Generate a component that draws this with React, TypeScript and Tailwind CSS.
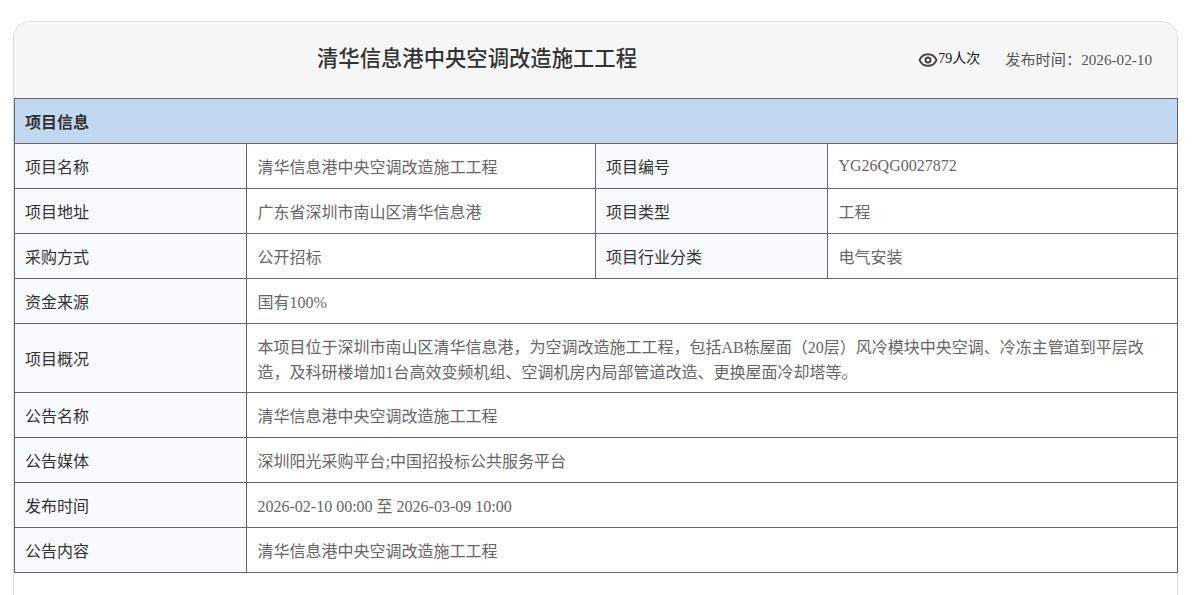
import { Eye } from "lucide-react"

const labelCell = "border border-[#666] bg-[#f9fafc] px-[10px] pt-[4px] pb-0 text-left font-normal text-[#333]"
const valueCell = "border border-[#666] pl-[10.5px] pr-[10px] pt-[3px] pb-0 text-left text-[#666]"

const fullRows = [
    { label: "资金来源", value: "国有100%" },
    {
        label: "项目概况",
        value: "本项目位于深圳市南山区清华信息港，为空调改造施工工程，包括AB栋屋面（20层）风冷模块中央空调、冷冻主管道到平层改造，及科研楼增加1台高效变频机组、空调机房内局部管道改造、更换屋面冷却塔等。",
        tall: true,
    },
    { label: "公告名称", value: "清华信息港中央空调改造施工工程" },
    { label: "公告媒体", value: "深圳阳光采购平台;中国招投标公共服务平台" },
    { label: "发布时间", value: "2026-02-10 00:00 至 2026-03-09 10:00" },
    { label: "公告内容", value: "清华信息港中央空调改造施工工程" },
]

const splitRows = [
    ["项目名称", "清华信息港中央空调改造施工工程", "项目编号", "YG26QG0027872"],
    ["项目地址", "广东省深圳市南山区清华信息港", "项目类型", "工程"],
    ["采购方式", "公开招标", "项目行业分类", "电气安装"],
]

export default function App() {
    return (
        <div className="h-[595px] overflow-hidden bg-white pl-[13px] pt-[21px] font-['Liberation_Serif','Noto_Sans_CJK_SC',serif] text-base">
            <div className="h-[600px] w-[1165px] rounded-t-[16px] border border-[#ddd] bg-white">
                {/* Header */}
                <div className="relative flex h-[76px] items-center justify-end rounded-t-[16px] bg-[#f7f7f7] pr-[25px]">
                    <h1 className="absolute left-0 right-[237px] text-center text-[21.33px] font-medium text-[#333]">
                        清华信息港中央空调改造施工工程
                    </h1>
                    <div className="flex items-center">
                        <Eye className="h-[20px] w-[20px] text-[#444]" strokeWidth={2.4} />
                        <span className="mt-[-2px] text-sm text-[#111]">79人次</span>
                        <span className="ml-[25px] text-[15.2px] text-[#555]">发布时间：2026-02-10</span>
                    </div>
                </div>

                {/* Detail table */}
                <table className="w-[1163px] table-fixed border-collapse">
                    <colgroup>
                        <col className="w-[232px]" />
                        <col className="w-[349px]" />
                        <col className="w-[232px]" />
                        <col className="w-[350px]" />
                    </colgroup>
                    <tbody>
                        <tr className="h-[45px]">
                            <th colSpan={4} className="border border-[#666] bg-[#c2d8f0] px-[10px] pt-[3px] text-left font-bold text-[#333]">
                                项目信息
                            </th>
                        </tr>
                        {splitRows.map((row) => (
                            <tr key={row[0]} className="h-[45px]">
                                <td className={labelCell}>{row[0]}</td>
                                <td className={valueCell}>{row[1]}</td>
                                <td className={labelCell}>{row[2]}</td>
                                <td className={row[3].startsWith("YG") ? `${valueCell} !pt-0` : valueCell}>{row[3]}</td>
                            </tr>
                        ))}
                        {fullRows.map((row) => (
                            <tr key={row.label} className={row.tall ? "h-[69px]" : "h-[45px]"}>
                                <td className={labelCell}>{row.label}</td>
                                <td colSpan={3} className={`${valueCell} leading-[25px]`}>
                                    {row.value}
                                </td>
                            </tr>
                        ))}
                    </tbody>
                </table>
            </div>
        </div>
    )
}
